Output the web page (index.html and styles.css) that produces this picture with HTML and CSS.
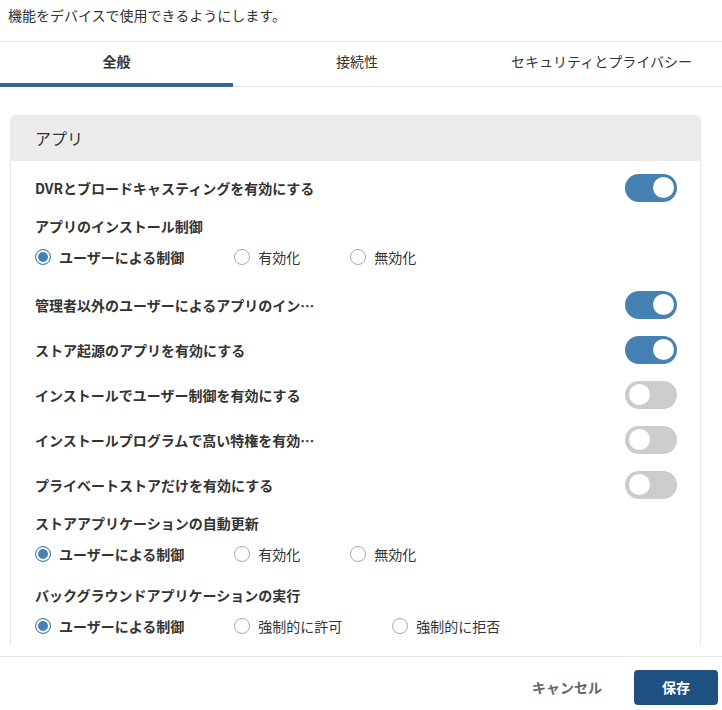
FILE: index.html
```html
<!DOCTYPE html>
<html lang="ja">
<head>
    <meta charset="UTF-8">
    <meta name="viewport" content="width=device-width, initial-scale=1.0">
    <title>アプリ設定</title>
    <link rel="stylesheet" href="styles.css">
</head>
<body>
    <div class="dialog">
        <div class="intro">機能をデバイスで使用できるようにします。</div>

        <div class="tabs">
            <button class="tab active">全般</button>
            <button class="tab">接続性</button>
            <button class="tab">セキュリティとプライバシー</button>
        </div>

        <div class="content">
            <div class="card">
                <div class="card-header">アプリ</div>
                <div class="card-body">
                    <div class="setting">
                        <span class="setting-label">DVRとブロードキャスティングを有効にする</span>
                        <span class="switch on"></span>
                    </div>

                    <div class="group">
                        <div class="group-label">アプリのインストール制御</div>
                        <div class="radios">
                            <label class="radio checked"><span class="dot"></span>ユーザーによる制御</label>
                            <label class="radio"><span class="dot"></span>有効化</label>
                            <label class="radio"><span class="dot"></span>無効化</label>
                        </div>
                    </div>

                    <div class="setting">
                        <span class="setting-label" title="管理者以外のユーザーによるアプリのインストールを有効にする">管理者以外のユーザーによるアプリのイン…</span>
                        <span class="switch on"></span>
                    </div>
                    <div class="setting">
                        <span class="setting-label">ストア起源のアプリを有効にする</span>
                        <span class="switch on"></span>
                    </div>
                    <div class="setting">
                        <span class="setting-label">インストールでユーザー制御を有効にする</span>
                        <span class="switch"></span>
                    </div>
                    <div class="setting">
                        <span class="setting-label" title="インストールプログラムで高い特権を有効にする">インストールプログラムで高い特権を有効…</span>
                        <span class="switch"></span>
                    </div>
                    <div class="setting">
                        <span class="setting-label">プライベートストアだけを有効にする</span>
                        <span class="switch"></span>
                    </div>

                    <div class="group">
                        <div class="group-label">ストアアプリケーションの自動更新</div>
                        <div class="radios">
                            <label class="radio checked"><span class="dot"></span>ユーザーによる制御</label>
                            <label class="radio"><span class="dot"></span>有効化</label>
                            <label class="radio"><span class="dot"></span>無効化</label>
                        </div>
                    </div>

                    <div class="group">
                        <div class="group-label">バックグラウンドアプリケーションの実行</div>
                        <div class="radios">
                            <label class="radio checked"><span class="dot"></span>ユーザーによる制御</label>
                            <label class="radio"><span class="dot"></span>強制的に許可</label>
                            <label class="radio"><span class="dot"></span>強制的に拒否</label>
                        </div>
                    </div>
                </div>
            </div>
        </div>

        <div class="footer">
            <button class="btn-cancel">キャンセル</button>
            <button class="btn-save">保存</button>
        </div>
    </div>
</body>
</html>
```

FILE: styles.css
```css
body {
    margin: 0;
    font-family: "Noto Sans CJK JP", "Noto Sans", sans-serif;
    font-size: 14px;
    color: #333;
    background-color: #ffffff;
}

.dialog {
    width: 722px;
    height: 710px;
    display: flex;
    flex-direction: column;
}

.intro {
    height: 42px;
    padding: 5px 8px 0;
    box-sizing: border-box;
    line-height: 20px;
    border-bottom: 1px solid #e6e6e6;
}

.tabs {
    display: grid;
    grid-template-columns: 233px 248px 1fr;
    height: 44px;
    border-bottom: 1px solid #e6e6e6;
}

.tab {
    border: none;
    background: none;
    font-family: inherit;
    font-size: 14px;
    color: #333;
    padding: 0 0 3px;
    border-bottom: 4px solid transparent;
    margin-bottom: -1px;
    cursor: pointer;
}

.tab.active {
    font-weight: bold;
    border-bottom-color: #336699;
}

.content {
    height: 558px;
    overflow: hidden;
    padding: 28px 21px 0 10px;
    box-sizing: border-box;
}

.card {
    border: 1px solid #e8e8e8;
    border-bottom: none;
    border-radius: 6px 6px 0 0;
}

.card-header {
    height: 45px;
    background-color: #ebebeb;
    border-radius: 5px 5px 0 0;
    padding: 0 24px;
    font-size: 16px;
    line-height: 45px;
}

.card-body {
    padding: 4px 23px 20px 24px;
}

.setting {
    height: 45px;
    display: flex;
    align-items: center;
    justify-content: space-between;
}

.setting-label {
    font-weight: bold;
    white-space: nowrap;
}

.switch {
    width: 52px;
    height: 28px;
    border-radius: 14px;
    background-color: #cccccc;
    position: relative;
    flex-shrink: 0;
}

.switch::after {
    content: "";
    position: absolute;
    top: 3.5px;
    left: 3.5px;
    width: 21px;
    height: 21px;
    border-radius: 50%;
    background-color: #ffffff;
}

.switch.on {
    background-color: #4581b3;
}

.switch.on::after {
    left: 27.5px;
}

.group {
    padding: 6px 0 15px;
}

.group-label {
    font-weight: bold;
    line-height: 20px;
    margin-bottom: 11px;
}

.radios {
    display: flex;
    gap: 50px;
    line-height: 20px;
}

.radio {
    display: flex;
    align-items: center;
    gap: 8px;
}

.radio .dot {
    width: 16px;
    height: 16px;
    box-sizing: border-box;
    border-radius: 50%;
    border: 1px solid #aaaaaa;
    background-color: #ffffff;
}

.radio.checked {
    font-weight: bold;
}

.radio.checked .dot {
    border-color: #4581b3;
    background-color: #4581b3;
    box-shadow: inset 0 0 0 2px #ffffff;
}

.footer {
    margin-top: 11px;
    border-top: 1px solid #e6e6e6;
    flex: 1;
    display: flex;
    align-items: center;
    justify-content: flex-end;
    gap: 16px;
    padding: 7px 4px 0 0;
}

.footer button {
    font-family: inherit;
    font-size: 14px;
    font-weight: bold;
    border: none;
    cursor: pointer;
}

.btn-cancel {
    background: none;
    color: #666;
    padding: 0 16px;
    height: 35px;
}

.btn-save {
    width: 84px;
    height: 35px;
    border-radius: 4px;
    background-color: #1f5180;
    color: #ffffff;
}
```
